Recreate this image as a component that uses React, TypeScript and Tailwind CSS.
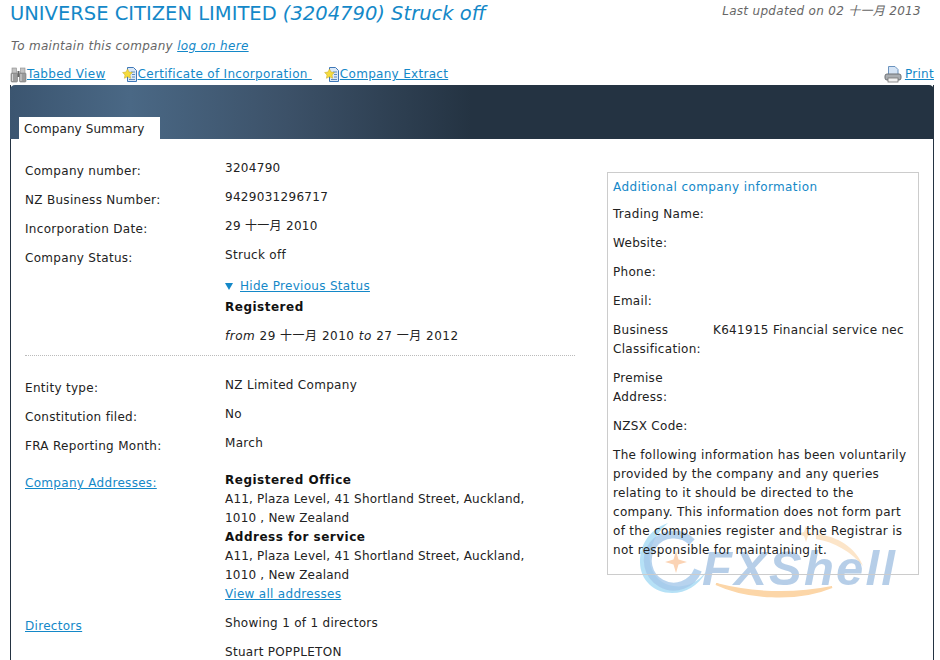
import { ReactNode } from "react";

function Row({ label, children }: { label: ReactNode; children: ReactNode }) {
  return (
    <div className="flex h-[29px]">
      <div className="w-[200px] pt-[3px]">{label}</div>
      <div>{children}</div>
    </div>
  );
}

function Binoculars() {
  return (
    <svg width="17" height="16" viewBox="0 0 17 16" className="shrink-0">
      <rect x="1" y="6" width="6.500" height="9" rx="1" fill="#9c9c9c" stroke="#777" strokeWidth="0.6" />
      <rect x="9.500" y="6" width="6.500" height="9" rx="1" fill="#9c9c9c" stroke="#777" strokeWidth="0.6" />
      <rect x="2" y="1" width="4.500" height="5" fill="#c4c4c4" stroke="#8a8a8a" strokeWidth="0.6" />
      <rect x="10.500" y="1" width="4.500" height="5" fill="#c4c4c4" stroke="#8a8a8a" strokeWidth="0.6" />
      <rect x="7.500" y="4" width="2" height="6" fill="#666" />
      <path d="M2.500 7v7M11 7v7" stroke="#d6d6d6" />
    </svg>
  );
}

function CertIcon() {
  return (
    <svg width="16" height="16" viewBox="0 0 16 16" className="shrink-0">
      <path d="M5.500 .5h6l3 3v11h-9z" fill="#dbe8f7" stroke="#3f78b8" />
      <path d="M9 5h4M10 7.500h3M10 10h3M7 12.500h6" stroke="#4f7fb5" strokeWidth="0.9" />
      <path d="M5.500 2l1.500 3 3.400.5-2.400 2.400.6 3.400-3.100-1.600-3.100 1.600.6-3.400L.6 5.500 4 5z" fill="#f5dc3e" stroke="#c4a520" strokeWidth="0.5" />
    </svg>
  );
}

function PrintIcon() {
  return (
    <svg width="18" height="17" viewBox="0 0 18 17" className="shrink-0">
      <path d="M4.500.5h6.500l3 3v6h-9.500z" fill="#d5e4f5" stroke="#6b93bf" />
      <rect x="1" y="8" width="16" height="6" rx="2" fill="#a9adb1" stroke="#6e7277" />
      <rect x="4" y="12" width="10" height="4" fill="#f2f2f2" stroke="#777" strokeWidth="0.8" />
    </svg>
  );
}

export default function App() {
  return (
    <div className="relative isolate h-[660px] w-[940px] overflow-hidden bg-white font-['DejaVu_Sans','Noto_Sans_CJK_SC',sans-serif] text-[12px] leading-[19px] tracking-[0.3px] text-[#222]">
      {/* Top heading */}
      <div className="flex items-start justify-between pl-[10px] pr-[19px]">
        <h1 className="text-[19.5px] leading-[27px] tracking-normal text-[#1488c8]">
          UNIVERSE CITIZEN LIMITED <em>(3204790) Struck off</em>
        </h1>
        <p className="pt-[2px] italic leading-[19px] text-[#666]">Last updated on 02 十一月 2013</p>
      </div>
      <p className="mt-[9px] pl-[11px] pt-[1px] italic text-[#666]">
        To maintain this company <a className="text-[#1488c8] underline">log on here</a>
      </p>

      {/* Toolbar */}
      <div className="mt-[8px] flex h-[20px] items-end justify-between pl-[10px] pr-[6px]">
        <div className="flex items-center">
          <Binoculars />
          <a className="text-[#1488c8] underline">Tabbed View</a>
          <span className="ml-[16px]"><CertIcon /></span>
          <a className="whitespace-pre text-[#1488c8] underline">Certificate of Incorporation </a>
          <span className="ml-[12px]"><CertIcon /></span>
          <a className="text-[#1488c8] underline">Company Extract</a>
        </div>
        <div className="flex items-center gap-[3px]">
          <PrintIcon />
          <a className="text-[#1488c8] underline">Print</a>
        </div>
      </div>

      {/* Panel */}
      <div className="ml-[10px] mt-[1px] w-[924px] border-x border-[#243342]">
        <div className="-mx-px flex h-[54px] items-end rounded-t-[5px] bg-[linear-gradient(90deg,#3b5570_0%,#4a6885_13%,#3c5168_30%,#243342_50%,#243342_100%)] pl-[9px]">
          <div className="flex h-[22px] w-[141px] items-center bg-white pl-[5px] pt-[2px] tracking-[0.1px] text-[#222]">Company Summary</div>
        </div>

        <div className="flex pl-[14px] pt-[20px]">
          <div className="w-[550px]">
            <Row label="Company number:">3204790</Row>
            <Row label="NZ Business Number:">9429031296717</Row>
            <Row label="Incorporation Date:">29 十一月 2010</Row>
            <Row label="Company Status:">Struck off</Row>
            <div className="pl-[200px]">
              <div className="mt-[2px] flex items-center">
                <span className="mr-[7px] h-0 w-0 border-x-[4px] border-t-[7px] border-x-transparent border-t-[#1488c8]" />
                <a className="text-[#1488c8] underline">Hide Previous Status</a>
              </div>
              <p className="mt-[2px] font-bold tracking-[0.5px] text-[#111]">Registered</p>
              <p className="mt-[10px] tracking-[0.5px]"><em>from</em> 29 十一月 2010 <em>to</em> 27 一月 2012</p>
            </div>
            <div className="mt-[9px] border-t border-dotted border-[#bbb]" />
            <div className="mt-[20px]">
              <Row label="Entity type:">NZ Limited Company</Row>
              <Row label="Constitution filed:">No</Row>
              <Row label="FRA Reporting Month:">March</Row>
            </div>
            <div className="mt-[8px] flex">
              <div className="w-[200px] pt-[3px]"><a className="text-[#1488c8] underline">Company Addresses:</a></div>
              <div className="w-[310px]">
                <p className="font-bold tracking-[0.5px] text-[#111]">Registered Office</p>
                <p className="tracking-[0.2px]">A11, Plaza Level, 41 Shortland Street, Auckland, 1010 , New Zealand</p>
                <p className="font-bold tracking-[0.5px] text-[#111]">Address for service</p>
                <p className="tracking-[0.2px]">A11, Plaza Level, 41 Shortland Street, Auckland, 1010 , New Zealand</p>
                <a className="text-[#1488c8] underline">View all addresses</a>
              </div>
            </div>
            <div className="mt-[10px] flex">
              <div className="w-[200px] pt-[3px]"><a className="text-[#1488c8] underline">Directors</a></div>
              <div>
                <p>Showing 1 of 1 directors</p>
                <p className="mt-[10px]">Stuart POPPLETON</p>
              </div>
            </div>
          </div>

          {/* Additional info */}
          <div className="ml-[32px] mt-[13px] h-[403px] w-[312px] border border-[#ccc] px-[5px] pt-[5px]">
            <h2 className="tracking-[0.4px] text-[#1488c8]">Additional company information</h2>
            <div className="mt-[8px] space-y-[10px]">
              <p>Trading Name:</p>
              <p>Website:</p>
              <p>Phone:</p>
              <p>Email:</p>
              <div className="flex">
                <div className="w-[100px]">Business Classification:</div>
                <div>K641915 Financial service nec</div>
              </div>
              <div className="w-[100px]">Premise Address:</div>
              <p>NZSX Code:</p>
              <p>
                The following information has been voluntarily provided by the company and any queries relating to it should be directed to the company. This information does not form part of the companies register and the Registrar is not responsible for maintaining it.
              </p>
            </div>
          </div>
        </div>
      </div>

      {/* Watermark, sits behind the page text */}
      <div className="pointer-events-none absolute left-[640px] top-[520px] -z-10 h-[82px] w-[256px]">
        <svg width="256" height="82" viewBox="0 0 256 82" className="absolute left-0 top-0">
          <path d="M28 3C8 10 0 26 0 42c0 18 14 31 32 31 14 0 26-7 34-21-8 10-20 16-32 14C18 64 8 50 10 34 12 20 20 10 28 3z" fill="#a9dcf5" opacity="0.85" />
          <path d="M52 22A26 26 0 1 0 58 50" fill="none" stroke="#a5c8ea" strokeWidth="8" opacity="0.8" />
          <path d="M36 31l2.500 8.500 8.500 2.500-8.500 2.500-2.500 8.500-2.500-8.500-8.500-2.500 8.500-2.500z" fill="#fbd3b4" />
          <path d="M166 6l2 6 7 2-7 2-2 6-2-6-7-2 7-2zM176 14c22 2 40 14 47 32-12-14-28-24-47-27z" fill="#fbdcb7" opacity="0.75" />
          <path d="M76 64c30 14 80 18 116 3-40 8-80 6-116-3z" fill="#fcd6a8" stroke="#fcd6a8" strokeWidth="2" />
        </svg>
        <span className="absolute left-[62px] top-[28px] font-['Liberation_Sans',sans-serif] text-[49px] font-bold italic leading-[40px] tracking-[2.2px] text-[#6f9fd2] opacity-50">FXShell</span>
      </div>
    </div>
  );
}
